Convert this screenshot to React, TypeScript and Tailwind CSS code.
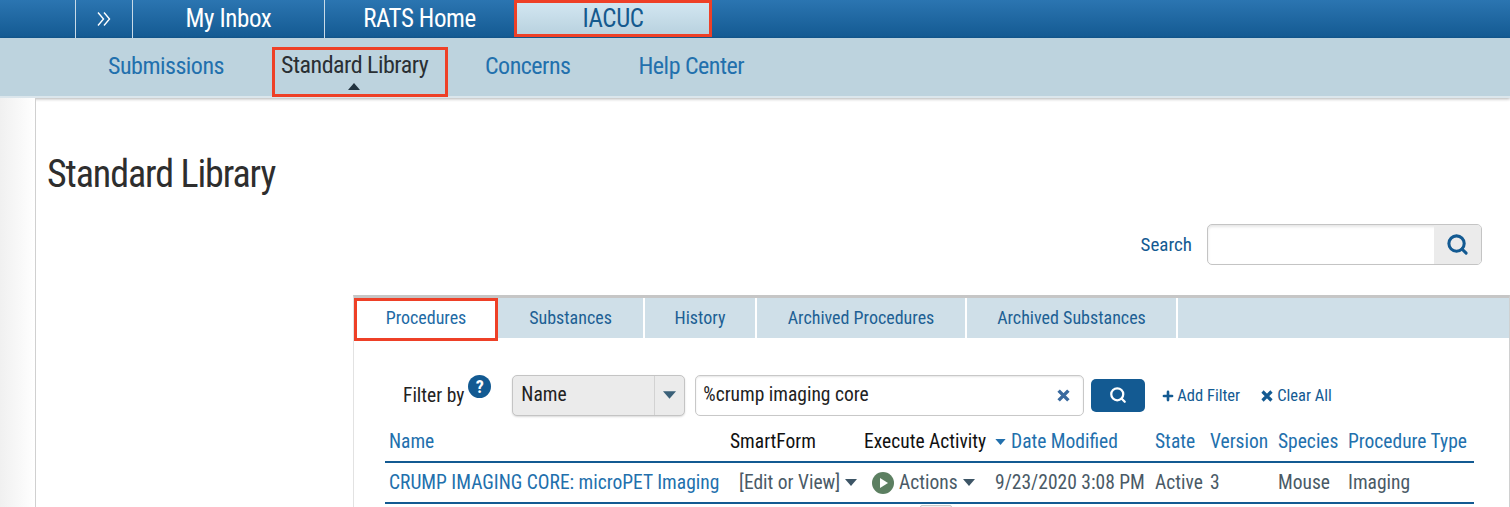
import { Plus, Search } from 'lucide-react'

const Caret = ({ className }: { className: string }) => (
  <svg viewBox="0 0 12 7" className={className} fill="currentColor">
    <path d="M0 0h12L6 7z" />
  </svg>
)

const Cross = ({ className }: { className: string }) => (
  <svg viewBox="0 0 12 12" className={className} fill="none" stroke="currentColor" strokeWidth="3.2">
    <path d="M1.5 1.5l9 9M10.5 1.5l-9 9" />
  </svg>
)

const DoubleChevron = ({ className }: { className: string }) => (
  <svg viewBox="0 0 14 16" className={className} fill="none" stroke="currentColor" strokeWidth="1.4">
    <path d="M1 1.5L6.5 8 1 14.5M7 1.5L12.5 8 7 14.5" />
  </svg>
)

const gridCols = 'grid grid-cols-[345px_134px_131px_160px_55px_68px_70px_126px]'

function TopNav() {
  return (
    <div className="h-[38px] flex pl-[75px] bg-gradient-to-b from-[#2b75b1] to-[#135a92] text-[25px] tracking-[-0.4px] font-stretch-[82%] text-white">
      <div className="w-[58px] flex items-center justify-center border-x border-[#c9dbe8]">
        <DoubleChevron className="w-[14px] h-[16px]" />
      </div>
      <div className="w-[192px] flex items-center justify-center border-r border-[#c9dbe8]">My Inbox</div>
      <div className="w-[189px] flex items-center justify-center">RATS Home</div>
      <div className="w-[198px] h-[37px] flex items-center justify-center border-[3px] border-[#ee4027] bg-gradient-to-b from-[#d2e6f1] to-[#b9d2df] text-[#155a8e]">
        IACUC
      </div>
    </div>
  )
}

function SubNav() {
  return (
    <div className="h-[60px] flex items-start bg-[#bdd3de] border-b-2 border-[#dbe6ec] shadow-[0_1px_3px_rgba(0,0,0,0.3)] text-[24px] leading-[36px] tracking-[-0.5px] font-stretch-[82%] text-[#2270ad]">
      <div className="ml-[108px] pt-[10px]">Submissions</div>
      <div className="ml-[48px] mt-[9px] w-[176px] h-[50px] relative pl-[6px] leading-[30px] border-[3px] border-[#ee4027] text-[#2a2f33]">
        Standard Library
        <Caret className="absolute bottom-[4px] left-[72px] w-[14px] h-[7px] rotate-180 text-[#22333f]" />
      </div>
      <div className="ml-[37px] pt-[10px]">Concerns</div>
      <div className="ml-[68px] pt-[10px]">Help Center</div>
    </div>
  )
}

function SearchRow() {
  return (
    <div className="flex justify-end items-center pr-[28px] mt-[27px]">
      <span className="text-[19px] font-stretch-[82%] text-[#135a92] mr-[15px] mt-[2px]">Search</span>
      <div className="w-[275px] h-[41px] flex border border-[#c4c4c4] rounded-[5px] overflow-hidden shadow-[inset_0_2px_3px_rgba(0,0,0,0.1)]">
        <div className="flex-1" />
        <div className="w-[47px] bg-[#ebebeb] flex items-center justify-center">
          <Search size={23} strokeWidth={3.2} className="text-[#135a92]" />
        </div>
      </div>
    </div>
  )
}

function Tabs() {
  const tabs = [
    { label: 'Substances', width: 'w-[147px]' },
    { label: 'History', width: 'w-[112px]' },
    { label: 'Archived Procedures', width: 'w-[210px]' },
    { label: 'Archived Substances', width: 'w-[211px]' },
  ]
  return (
    <div className="flex h-[40px] bg-[#cfdfe8] text-[18px] font-stretch-[82%] text-[#1d5f94]">
      <div className="w-[144px] h-[43px] flex items-center justify-center pb-[4px] bg-white border-[3px] border-[#ee4027] relative z-10 text-[#1d6aa5]">
        Procedures
      </div>
      {tabs.map((t) => (
        <div key={t.label} className={`${t.width} flex items-center justify-center pb-[2px] border-r-2 border-white`}>
          {t.label}
        </div>
      ))}
    </div>
  )
}

function FilterRow() {
  return (
    <div className="flex items-center h-[42px] mt-[36px] ml-[49px] text-[19.5px] font-stretch-[82%]">
      <span className="text-[#222] mt-[1px]">Filter by</span>
      <span className="w-[23px] h-[23px] ml-[4px] mb-[17px] rounded-full bg-[#135a92] text-white text-[18px] font-bold flex items-center justify-center">?</span>
      <div className="w-[173px] h-[41px] ml-[21px] flex rounded-[5px] border border-[#c4c4c4] bg-[#ebebeb] text-[#222] shadow-[0_1px_2px_rgba(0,0,0,0.15)]">
        <span className="flex-1 flex items-center pl-[8px]">Name</span>
        <span className="w-[30px] flex items-center justify-center border-l border-[#d2d2d2]">
          <Caret className="w-[13px] h-[8px] text-[#3a6078]" />
        </span>
      </div>
      <div className="w-[389px] h-[41px] ml-[10px] flex items-center justify-between pl-[7px] pr-[13px] rounded-[5px] border border-[#c8c8c8] text-[#222] shadow-[inset_0_1px_2px_rgba(0,0,0,0.1)]">
        %crump imaging core
        <Cross className="w-[13px] h-[13px] text-[#3a6a9f]" />
      </div>
      <div className="w-[54px] h-[33px] ml-[7px] rounded-[5px] bg-[#135a92] flex items-center justify-center">
        <Search size={18} strokeWidth={3} className="text-white" />
      </div>
      <div className="ml-[16px] mt-[2px] flex items-center text-[16.5px] text-[#135a92]">
        <Plus size={14} strokeWidth={4.5} />
        <span className="ml-[2px]">Add Filter</span>
      </div>
      <div className="ml-[21px] mt-[2px] flex items-center text-[16.5px] text-[#135a92]">
        <Cross className="w-[12px] h-[12px]" />
        <span className="ml-[4px]">Clear All</span>
      </div>
    </div>
  )
}

function ResultTable() {
  return (
    <div className="ml-[31px] w-[1089px] mt-[1px] text-[19.5px] font-stretch-[82%] whitespace-nowrap">
      <div className={`${gridCols} h-[46px] pt-[6px] items-center border-b-2 border-[#135a92] text-[#2270ad]`}>
        <span className="pl-[4px]">Name</span>
        <span className="text-[#111]">SmartForm</span>
        <span className="text-[#111]">Execute Activity</span>
        <span className="flex items-center">
          <Caret className="w-[11px] h-[6px] mr-[5px]" />
          Date Modified
        </span>
        <span>State</span>
        <span>Version</span>
        <span>Species</span>
        <span>Procedure Type</span>
      </div>
      <div className={`${gridCols} h-[41px] items-center border-b-2 border-[#135a92] text-[#4a5a66]`}>
        <span className="pl-[4px] text-[#2270ad]">CRUMP IMAGING CORE: microPET Imaging</span>
        <span className="flex items-center pl-[9px]">
          [Edit or View]
          <Caret className="w-[12px] h-[7px] ml-[5px] text-[#3d5566]" />
        </span>
        <span className="flex items-center pl-[8px]">
          <span className="w-[22px] h-[22px] mr-[5px] rounded-full bg-[#5c7f61] flex items-center justify-center">
            <span className="ml-[2px] border-y-[5px] border-l-[8px] border-y-transparent border-l-white" />
          </span>
          Actions
          <Caret className="w-[12px] h-[7px] ml-[5px] text-[#3d5566]" />
        </span>
        <span>9/23/2020 3:08 PM</span>
        <span>Active</span>
        <span>3</span>
        <span>Mouse</span>
        <span>Imaging</span>
      </div>
      {/* top edge of the next row's button, cut off by the screenshot */}
      <div className="ml-[535px] mt-[1px] w-[32px] h-[8px] border border-[#c8c8c8] bg-[#f0f0f0] rounded-t-[2px]" />
    </div>
  )
}

export default function App() {
  return (
    <div className="h-[507px] overflow-hidden bg-white font-['Roboto',sans-serif]">
      <TopNav />
      <SubNav />
      <div className="flex">
        <div className="w-[36px] h-[410px] shrink-0 border-r border-[#d0d0d0] bg-gradient-to-r from-[#f0f0f0] to-white" />
        <div className="flex-1 min-w-0">
          <h1 className="pl-[11px] pt-[53px] text-[38px] leading-[46px] font-stretch-[82%] tracking-[-1.1px] text-[#2e2e2e]">Standard Library</h1>
          <SearchRow />
          <div className="ml-[317px] mt-[30px] border-t-[3px] border-[#c6c6c6] border-l border-l-[#e2e2e2] border-r border-r-[#d0d0d0] h-[220px]">
            <Tabs />
            <FilterRow />
            <ResultTable />
          </div>
        </div>
      </div>
    </div>
  )
}
